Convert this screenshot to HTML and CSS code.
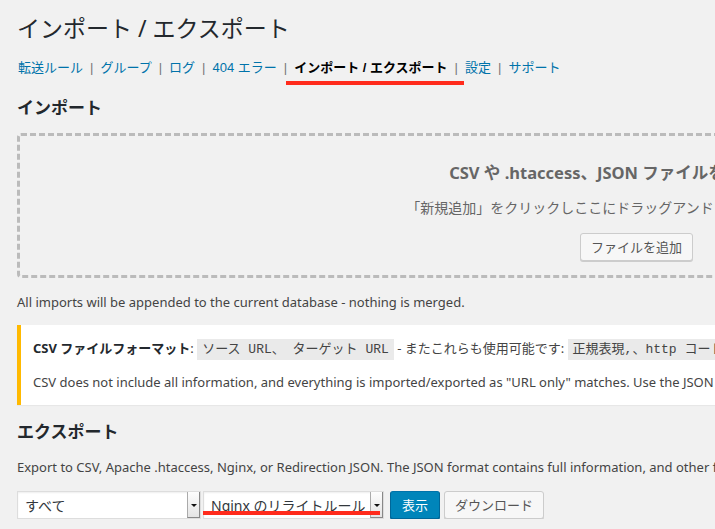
FILE: index.html
```html
<!DOCTYPE html>
<html lang="ja">
<head>
<meta charset="utf-8">
<title>インポート / エクスポート</title>
<link rel="stylesheet" href="styles.css">
</head>
<body>
<div class="wrap">
  <h1 class="title">インポート / エクスポート</h1>
  <ul class="subnav">
    <li><a href="#">転送ルール</a><span class="sep">|</span></li>
    <li><a href="#">グループ</a><span class="sep">|</span></li>
    <li><a href="#">ログ</a><span class="sep">|</span></li>
    <li><a href="#">404 エラー</a><span class="sep">|</span></li>
    <li><span class="current">インポート / エクスポート</span><span class="sep">|</span></li>
    <li><a href="#">設定</a><span class="sep">|</span></li>
    <li><a href="#">サポート</a></li>
  </ul>

  <h2 class="section">インポート</h2>
  <div class="dropzone">
    <h3>CSV や .htaccess、JSON ファイルをアップロード</h3>
    <p>「新規追加」をクリックしここにドラッグアンドドロップしてください。</p>
    <button class="btn">ファイルを追加</button>
  </div>
  <p class="plain">All imports will be appended to the current database - nothing is merged.</p>

  <div class="notice">
    <p class="fmt"><strong>CSV ファイルフォーマット</strong>: <code>ソース URL、 ターゲット URL</code> - またこれらも使用可能です: <code>正規表現,、http コード、一致タイプ、タイトル</code></p>
    <p class="note">CSV does not include all information, and everything is imported/exported as "URL only" matches. Use the JSON format for a full set of data.</p>
  </div>

  <h2 class="section export-title">エクスポート</h2>
  <p class="plain">Export to CSV, Apache .htaccess, Nginx, or Redirection JSON. The JSON format contains full information, and other formats contain partial information appropriate to the format.</p>

  <div class="export-row">
    <div class="select select-all"><span class="select-text">すべて</span><span class="arrow"></span></div>
    <div class="select select-format marked"><span class="select-text">Nginx のリライトルール</span><span class="arrow"></span></div>
    <button class="btn btn-primary">表示</button>
    <button class="btn btn-dl">ダウンロード</button>
  </div>
</div>
</body>
</html>
```

FILE: styles.css
```css
body {
  margin: 0;
  background: #f1f1f1;
  font-family: "Noto Sans", "Noto Sans CJK JP", sans-serif;
  font-size: 13px;
  color: #444;
  overflow: hidden;
}

.wrap {
  width: 1239px;
  padding-left: 17px;
}

.title {
  margin: 13px 0 0;
  font-size: 23px;
  font-weight: 400;
  line-height: 30px;
  color: #23282d;
}

.subnav {
  list-style: none;
  margin: 15px 0 0;
  padding: 0 0 0 1px;
  display: flex;
  height: 20px;
  line-height: 20px;
  color: #666;
  font-family: "Liberation Sans", "Noto Sans CJK JP", sans-serif;
}

.subnav a {
  color: #0073aa;
  text-decoration: none;
}

.sep {
  padding: 0 7px;
  color: #777;
}

.current {
  position: relative;
  font-weight: 700;
  color: #000;
}

.current::after {
  content: "";
  position: absolute;
  left: -8px;
  top: 21px;
  width: 178px;
  height: 4px;
  background: #ff2b1c;
}

.section {
  margin: 19px 0 0;
  font-size: 17px;
  font-weight: 700;
  line-height: 22px;
  height: 22px;
  color: #23282d;
}

.dropzone {
  margin-top: 14px;
  border: 3px dashed #bbb;
  border-radius: 4px;
  text-align: center;
  padding: 25px 0 14px;
  color: #666;
}

.dropzone h3 {
  margin: 0;
  font-size: 16.5px;
  line-height: 24px;
  height: 24px;
  font-weight: 700;
}

.dropzone p {
  margin: 13px 0 0;
  line-height: 20px;
  height: 20px;
  font-size: 14px;
}

.btn {
  font-family: inherit;
  font-size: 13px;
  height: 28px;
  padding: 0 10px;
  border: 1px solid #ccc;
  border-radius: 3px;
  background: #f7f7f7;
  color: #555;
  box-shadow: 0 1px 0 #ccc;
  box-sizing: border-box;
  line-height: 26px;
}

.dropzone .btn {
  margin-top: 15px;
  vertical-align: top;
}

.plain {
  margin: 14px 0 0;
  line-height: 20px;
  height: 20px;
}

.notice {
  margin-top: 13px;
  background: #fff;
  border-left: 4px solid #ffb900;
  box-shadow: 0 1px 1px rgba(0, 0, 0, 0.04);
  padding: 12px 12px 13px;
}

.notice .note {
  margin: 13px 0 0;
  line-height: 20px;
  height: 20px;
}

.notice .fmt {
  margin: 0;
  line-height: 22px;
  height: 22px;
}

.notice strong {
  color: #23282d;
}

code {
  font-family: "Liberation Mono", "Noto Sans CJK JP", monospace;
  font-size: 13px;
  background: #eaeaea;
  padding: 3px 5px 3px;
}

.export-title {
  margin-top: 16px;
}

.export-row {
  margin-top: 14px;
  display: flex;
  align-items: flex-start;
}

.select {
  position: relative;
  height: 28px;
  box-sizing: border-box;
  border: 1px solid #ddd;
  background: #fff;
  display: flex;
  align-items: center;
  justify-content: space-between;
  box-shadow: inset 0 1px 2px rgba(0, 0, 0, 0.07);
  padding-left: 7px;
  font-size: 14px;
  color: #32373c;
}

.select-all {
  width: 184px;
}

.select-format {
  width: 181px;
  margin-left: 2px;
}

.arrow {
  position: relative;
  align-self: stretch;
  width: 11px;
  border-left: 1px solid #aaa;
  border-right: 1px solid #888;
  border-bottom: 1px solid #888;
  background: linear-gradient(#fdfdfd, #e4e4e4);
}

.arrow::after {
  content: "";
  position: absolute;
  left: 3px;
  top: 12px;
  border-left: 3px solid transparent;
  border-right: 3px solid transparent;
  border-top: 3px solid #111;
}

.marked::after {
  content: "";
  position: absolute;
  left: -1px;
  bottom: 3px;
  width: 177px;
  height: 4px;
  background: #ff2b1c;
}

.btn-primary {
  margin-left: 6px;
  padding: 0 11px;
  background: #0085ba;
  border-color: #0073aa #006799 #006799;
  box-shadow: 0 1px 0 #006799;
  color: #fff;
}

.btn-dl {
  margin-left: 4px;
}
```
